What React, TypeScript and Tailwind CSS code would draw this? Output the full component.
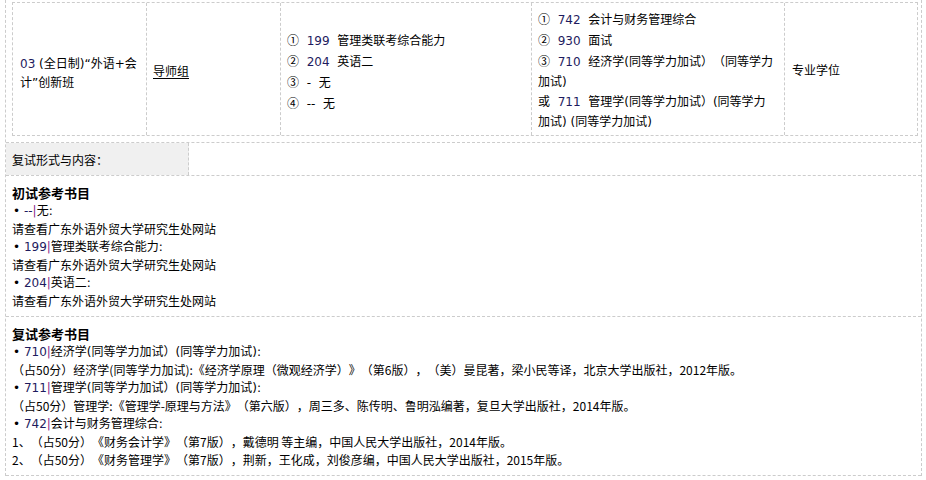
const latin = "font-['DejaVu_Sans','Noto_Sans_CJK_SC',sans-serif]";
const cjk = "font-['Noto_Sans_CJK_SC',sans-serif]";
const line = "border-dashed border-[#ccc]";

function Num({ children }: { children: React.ReactNode }) {
  return <span className="text-[#1e1b5e]">{children}</span>;
}

function Circ({ children }: { children: React.ReactNode }) {
  return <span className={cjk}>{children}</span>;
}

function Bar() {
  return <span className="text-[#8a2a8a]">|</span>;
}

const sp = "\u00a0\u00a0";

function BulletLine({ num, text }: { num: string; text: string }) {
  return (
    <div className={`${latin} whitespace-nowrap`}>
      <span className="pl-[1px]">•</span>
      {"\u00a0"}
      <Num>{num}</Num>
      <Bar />
      {text}
    </div>
  );
}

function BookLine({ children }: { children: React.ReactNode }) {
  return <div className={`${cjk} whitespace-nowrap`}>{children}</div>;
}

export default function App() {
  return (
    <div
      className={`w-[926px] h-[480px] overflow-hidden bg-white text-[12px] text-black [text-spacing-trim:space-all] ${latin}`}
    >
      <div className={`ml-[5px] w-[917px] border-x ${line}`}>
        {/* exam subjects table */}
        <div className={`border-b ${line} pl-[6px] pr-[3px] pt-[2px] pb-[6px]`}>
          <div className={`flex h-[134px] border ${line} leading-[20px]`}>
            <div className={`flex w-[134px] items-center border-r ${line} pl-[7px] pr-[4px] pt-[9px]`}>
              <div className="leading-[19px]">
                <Num>03</Num> (全日制)“外语+会
                <br />
                计”创新班
              </div>
            </div>
            <div className={`flex w-[134px] items-center border-r ${line} pl-[6px] pt-[5px]`}>
              <span className="underline underline-offset-2">导师组</span>
            </div>
            <div className={`flex w-[251px] items-center border-r ${line} pl-[6px] pt-[5px]`}>
              <div className="whitespace-nowrap">
                <div><Circ>①</Circ>{sp}<Num>199</Num>{sp}管理类联考综合能力</div>
                <div><Circ>②</Circ>{sp}<Num>204</Num>{sp}英语二</div>
                <div><Circ>③</Circ>{sp}-{sp}无</div>
                <div><Circ>④</Circ>{sp}--{sp}无</div>
              </div>
            </div>
            <div className={`flex w-[253px] items-center border-r ${line} pl-[6px] pt-[3px]`}>
              <div className="whitespace-nowrap">
                <div><Circ>①</Circ>{sp}<Num>742</Num>{sp}会计与财务管理综合</div>
                <div><Circ>②</Circ>{sp}<Num>930</Num>{sp}面试</div>
                <div><Circ>③</Circ>{sp}<Num>710</Num>{sp}经济学(同等学力加试）（同等学力</div>
                <div>加试)</div>
                <div>或{sp}<Num>711</Num>{sp}管理学(同等学力加试）(同等学力</div>
                <div>加试) (同等学力加试)</div>
              </div>
            </div>
            <div className="flex flex-1 items-center pl-[7px] pt-[4px]">专业学位</div>
          </div>
        </div>

        {/* retest heading */}
        <div className={`flex h-[33px] border-b ${line}`}>
          <div className={`flex w-[183px] items-center border-r ${line} bg-[#f0f0f0] pl-[6px] pt-[1px] ${cjk}`}>
            复试形式与内容：
          </div>
        </div>

        {/* first exam books */}
        <div className={`border-b ${line} pl-[6px] pt-[8px] pb-[6px] leading-[18px]`}>
          <div className={`${cjk} text-[13px] font-bold`}>初试参考书目</div>
          <BulletLine num="--" text="无:" />
          <BookLine>请查看广东外语外贸大学研究生处网站</BookLine>
          <BulletLine num="199" text="管理类联考综合能力:" />
          <BookLine>请查看广东外语外贸大学研究生处网站</BookLine>
          <BulletLine num="204" text="英语二:" />
          <BookLine>请查看广东外语外贸大学研究生处网站</BookLine>
        </div>

        {/* retest books */}
        <div className={`border-b ${line} pl-[6px] pt-[8px] pb-[6px] leading-[18px]`}>
          <div className={`${cjk} text-[13px] font-bold`}>复试参考书目</div>
          <BulletLine num="710" text="经济学(同等学力加试）(同等学力加试):" />
          <BookLine>
            （占50分）经济学(同等学力加试):《经济学原理（微观经济学）》（第6版），（美）曼昆著，梁小民等译，北京大学出版社，2012年版。
          </BookLine>
          <BulletLine num="711" text="管理学(同等学力加试）(同等学力加试):" />
          <BookLine>
            （占50分）管理学:《管理学-原理与方法》（第六版），周三多、陈传明、鲁明泓编著，复旦大学出版社，2014年版。
          </BookLine>
          <BulletLine num="742" text="会计与财务管理综合:" />
          <BookLine>1、（占50分）《财务会计学》（第7版），戴德明 等主编，中国人民大学出版社，2014年版。</BookLine>
          <BookLine>2、（占50分）《财务管理学》（第7版），荆新，王化成，刘俊彦编，中国人民大学出版社，2015年版。</BookLine>
        </div>
      </div>
    </div>
  );
}
